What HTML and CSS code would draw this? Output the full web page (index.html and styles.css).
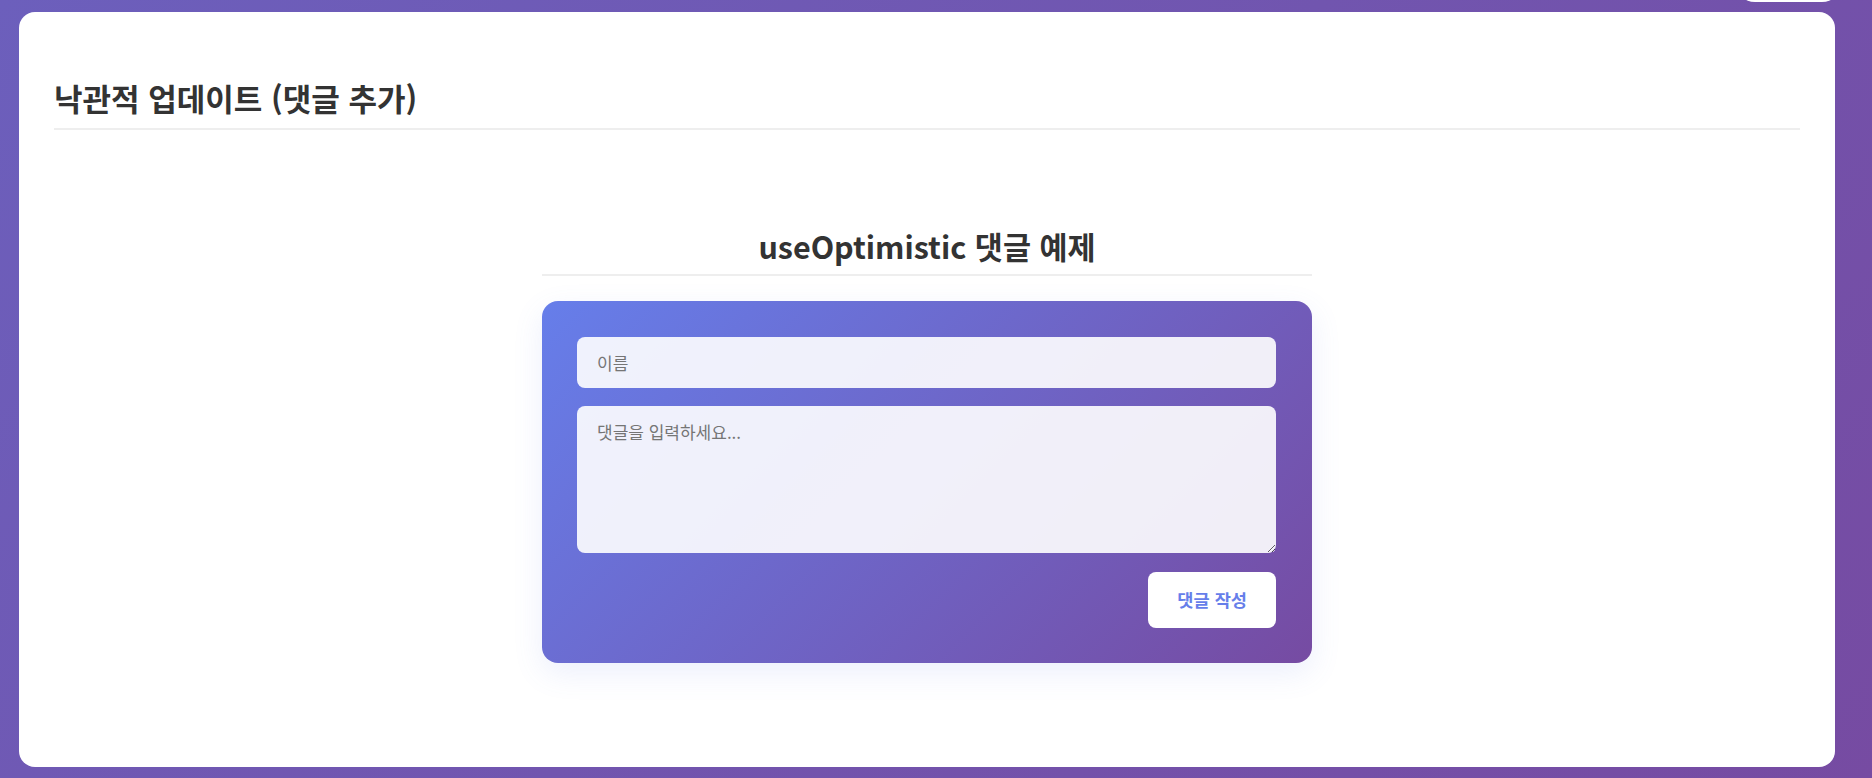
FILE: index.html
```html
<!DOCTYPE html>
<html lang="ko">
<head>
    <meta charset="UTF-8">
    <meta name="viewport" content="width=device-width, initial-scale=1.0">
    <title>낙관적 업데이트 (댓글 추가)</title>
    <link rel="stylesheet" href="styles.css">
</head>
<body>
    <a class="back-btn" href="#" aria-label="목록으로"></a>
    <div class="card">
        <h1 class="page-title">낙관적 업데이트 (댓글 추가)</h1>

        <div class="demo">
            <h2 class="demo-title">useOptimistic 댓글 예제</h2>
            <form class="comment-form" onsubmit="return false;">
                <input type="text" class="field" placeholder="이름">
                <textarea class="field field-area" placeholder="댓글을 입력하세요..."></textarea>
                <div class="actions">
                    <button type="submit" class="submit-btn">댓글 작성</button>
                </div>
            </form>
        </div>
    </div>
</body>
</html>
```

FILE: styles.css
```css
* {
    box-sizing: border-box;
}
html, body {
    height: 100%;
}
body {
    margin: 0;
    padding: 12px 37px 11px 19px;
    display: flex;
    flex-direction: column;
    font-family: "Noto Sans CJK KR", "Noto Sans", sans-serif;
    background: linear-gradient(135deg, #6c5fbc 0%, #764ba2 100%);
    position: relative;
    overflow: hidden;
}
.back-btn {
    position: absolute;
    top: -40px;
    right: 30px;
    width: 107px;
    height: 42px;
    border-radius: 20px;
    background: white;
}
.card {
    flex: 1;
    background: white;
    border-radius: 16px;
    padding: 66px 35px 40px 35px;
}
.page-title {
    margin: 0;
    font-size: 31px;
    font-weight: 700;
    color: #333;
    line-height: 40px;
    padding-bottom: 10px;
    border-bottom: 2px solid #eee;
}
.demo {
    max-width: 770px;
    margin: 96px auto 0;
}
.demo-title {
    margin: 0 0 25px;
    text-align: center;
    font-size: 30.5px;
    font-weight: 700;
    color: #333;
    line-height: 40px;
    padding-bottom: 8px;
    border-bottom: 2px solid #eee;
}
.comment-form {
    background: linear-gradient(135deg, #667eea 0%, #764ba2 100%);
    border-radius: 16px;
    padding: 36px 36px 35px 35px;
    box-shadow: 0 10px 30px rgba(102, 126, 234, 0.12);
    display: flex;
    flex-direction: column;
    gap: 18px;
}
.field {
    width: 100%;
    border: none;
    border-radius: 8px;
    padding: 15px 20px;
    font-family: inherit;
    font-size: 17px;
    line-height: 21px;
    background: rgba(255, 255, 255, 0.9);
    color: #333;
}
.field-area {
    height: 147px;
    resize: vertical;
}
.actions {
    display: flex;
    justify-content: flex-end;
    margin-top: 1px;
}
.submit-btn {
    padding: 16px 29px;
    border: none;
    border-radius: 8px;
    background: white;
    color: #667eea;
    font-family: inherit;
    font-size: 17.6px;
    font-weight: 700;
    line-height: 24px;
    cursor: pointer;
}
```
